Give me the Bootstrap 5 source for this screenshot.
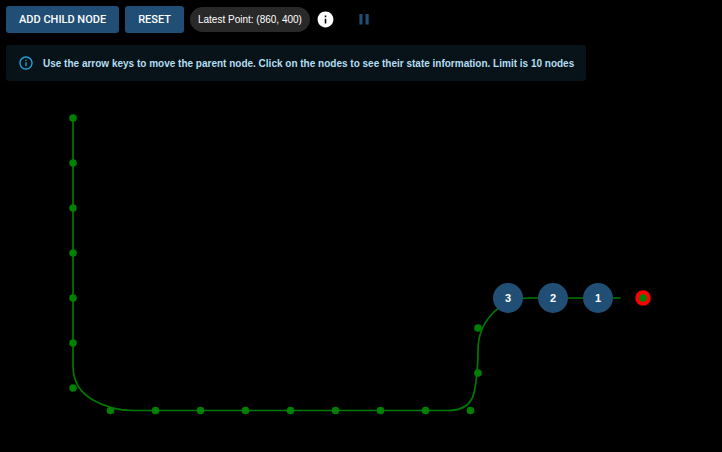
<!DOCTYPE html>
<html lang="en">
<head>
<meta charset="utf-8">
<meta name="viewport" content="width=device-width, initial-scale=1">
<title>Node path</title>
<link href="https://cdn.jsdelivr.net/npm/bootstrap@5.3.0/dist/css/bootstrap.min.css" rel="stylesheet">
<style>
  body { background: #000; font-family: "Liberation Sans", Arial, sans-serif; font-size: 10px; line-height: 15px; }
  .toolbar { padding: 6px; gap: 6px; }
  .btn-action { --bs-btn-color: #fff; --bs-btn-bg: #204e75; --bs-btn-border-width: 0; --bs-btn-hover-color: #fff; --bs-btn-hover-bg: #2a618f; --bs-btn-padding-x: 13px; --bs-btn-padding-y: 6px; --bs-btn-font-family: Roboto, sans-serif; --bs-btn-font-size: 11px; --bs-btn-font-weight: 500; --bs-btn-line-height: 15px; --bs-btn-border-radius: 3px; }
  .point-chip { background: #292929; color: #fff; padding: 5px 8px; }
  .btn-icon { --bs-btn-padding-x: 0; --bs-btn-padding-y: 0; --bs-btn-border-width: 0; color: #fff; }
  .btn-pause { color: #204e75; margin-left: 14px; }
  .hint { background: #071318; color: #b4def3; font-weight: 700; padding: 10px 12px; gap: 9px; border-radius: 3px; margin: 6px 6px 0; min-height: 36px; }
  .stage-art { height: 367px; }
  .btn-node { --bs-btn-color: #fff; --bs-btn-bg: #204e75; --bs-btn-border-width: 0; --bs-btn-hover-color: #fff; --bs-btn-hover-bg: #2a618f; --bs-btn-padding-x: 0; --bs-btn-padding-y: 0; --bs-btn-font-size: 11px; --bs-btn-font-weight: 700; width: 30px; height: 30px; top: 202px; }
  .node-1 { left: 583px; }
  .node-2 { left: 538px; }
  .node-3 { left: 493px; }
</style>
</head>
<body>
<header class="toolbar d-flex align-items-center">
  <button type="button" class="btn btn-action">ADD CHILD NODE</button>
  <button type="button" class="btn btn-action">RESET</button>
  <span class="point-chip rounded-pill">Latest Point: (860, 400)</span>
  <button type="button" class="btn btn-icon d-flex" aria-label="Information">
    <svg width="19" height="19" viewBox="0 0 24 24" fill="currentColor" aria-hidden="true"><path d="M12 2C6.480 2 2 6.480 2 12s4.480 10 10 10 10-4.480 10-10S17.520 2 12 2zm1 15h-2v-6h2v6zm0-8h-2V7h2v2z"/></svg>
  </button>
  <button type="button" class="btn btn-icon btn-pause d-flex" aria-label="Pause">
    <svg width="19" height="19" viewBox="0 0 19 19" fill="currentColor" aria-hidden="true"><path d="M4.400 4h3.100v10.500H4.400zM10.500 4h3.200v10.500h-3.200z"/></svg>
  </button>
</header>
<main>
  <div class="d-flex">
    <div class="hint d-flex align-items-center" role="note">
      <svg class="flex-shrink-0" width="16" height="16" viewBox="0 0 24 24" fill="#29a3dc" aria-hidden="true"><path d="M11 7h2v2h-2zm0 4h2v6h-2zm1-9C6.480 2 2 6.480 2 12s4.480 10 10 10 10-4.480 10-10S17.520 2 12 2zm0 18c-4.410 0-8-3.590-8-8s3.590-8 8-8 8 3.590 8 8-3.590 8-8 8z"/></svg>
      <span>Use the arrow keys to move the parent node. Click on the nodes to see their state information. Limit is 10 nodes</span>
    </div>
  </div>
  <div class="position-relative overflow-hidden">
    <svg class="stage-art d-block w-100" role="img" aria-label="Path travelled by the parent node">
      <g transform="translate(0 -81)">
        <path fill="none" stroke="#007800" stroke-width="1.7" d="M73 118V365.500Q73 388 91.750 399.250Q110.500 410.500 133 410.500H448Q470.500 410.500 474.250 391.750Q478 373 478 350.500Q478 328 493 313Q508 298 530.500 298H620.500"/>
        <circle cx="643" cy="298" r="7.700" fill="#f00"/>
        <g fill="#008000">
          <circle cx="73" cy="118" r="3.800"/><circle cx="73" cy="163" r="3.800"/><circle cx="73" cy="208" r="3.800"/><circle cx="73" cy="253" r="3.800"/><circle cx="73" cy="298" r="3.800"/><circle cx="73" cy="343" r="3.800"/><circle cx="73" cy="388" r="3.800"/>
          <circle cx="110.500" cy="410.500" r="3.800"/><circle cx="155.500" cy="410.500" r="3.800"/><circle cx="200.500" cy="410.500" r="3.800"/><circle cx="245.500" cy="410.500" r="3.800"/><circle cx="290.500" cy="410.500" r="3.800"/><circle cx="335.500" cy="410.500" r="3.800"/><circle cx="380.500" cy="410.500" r="3.800"/><circle cx="425.500" cy="410.500" r="3.800"/><circle cx="470.500" cy="410.500" r="3.800"/>
          <circle cx="478" cy="373" r="3.800"/><circle cx="478" cy="328" r="3.800"/><circle cx="643" cy="298" r="3.800"/>
        </g>
      </g>
    </svg>
    <button type="button" class="btn btn-node node-3 rounded-circle position-absolute">3</button>
    <button type="button" class="btn btn-node node-2 rounded-circle position-absolute">2</button>
    <button type="button" class="btn btn-node node-1 rounded-circle position-absolute">1</button>
  </div>
</main>
<script src="https://cdn.jsdelivr.net/npm/bootstrap@5.3.0/dist/js/bootstrap.bundle.min.js"></script>
</body>
</html>
